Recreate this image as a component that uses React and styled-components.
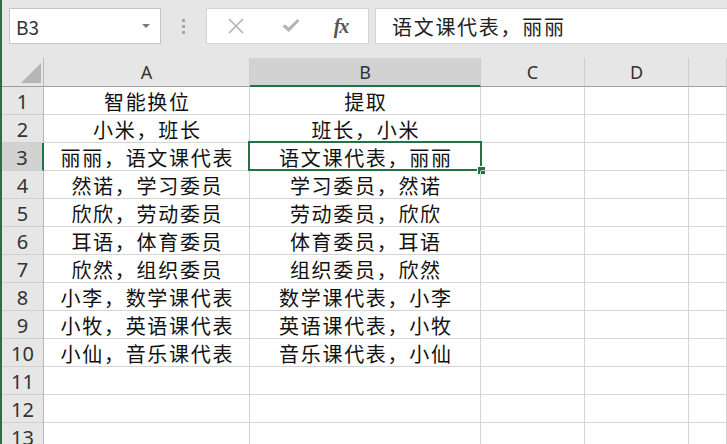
import React from "react";
import styled, { createGlobalStyle } from "styled-components";

const GREEN = "#217346";

const GlobalStyle = createGlobalStyle`
  html, body {
    margin: 0;
    padding: 0;
    overflow: hidden;
    background: #ffffff;
  }
  body {
    font-family: "Noto Sans CJK SC", "Noto Sans", sans-serif;
  }
`;

const Frame = styled.div`
  height: 100vh;
  border-left: 2px solid ${GREEN};
  display: flex;
  flex-direction: column;
`;

const Toolbar = styled.div`
  height: 58px;
  flex: none;
  background: #e6e6e6;
  display: flex;
  align-items: flex-start;
  padding: 8px 0 0 7px;
  box-sizing: border-box;
`;

const NameBox = styled.div`
  width: 152px;
  height: 36px;
  box-sizing: border-box;
  background: #fff;
  border: 1px solid #c6c6c6;
  display: flex;
  align-items: center;
  justify-content: space-between;
  padding: 0 10px 0 6px;
  font-size: 19px;
  color: #333;
`;

const Caret = styled.span`
  width: 0;
  height: 0;
  border-left: 4px solid transparent;
  border-right: 4px solid transparent;
  border-top: 4px solid #7a7a7a;
`;

const Grip = styled.div`
  width: 45px;
  height: 36px;
  display: flex;
  flex-direction: column;
  align-items: center;
  justify-content: center;
  gap: 3px;
`;

const Dot = styled.span`
  width: 3px;
  height: 3px;
  background: #a6a6a6;
`;

const ButtonBox = styled.div`
  width: 163px;
  height: 36px;
  box-sizing: border-box;
  background: #fff;
  border: 1px solid #d4d4d4;
  display: flex;
  align-items: center;
  padding-left: 20px;
`;

const IconSlot = styled.span`
  width: ${({ w }) => w}px;
  display: flex;
  align-items: center;
  justify-content: center;
  color: ${({ dark }) => (dark ? "#555" : "#b4b4b4")};
`;

const Fx = styled.span`
  font-family: "Liberation Serif", serif;
  font-style: italic;
  font-weight: bold;
  font-size: 20px;
  letter-spacing: -1px;
`;

const FormulaBox = styled.div`
  flex: 1;
  height: 36px;
  margin-left: 6px;
  box-sizing: border-box;
  background: #fff;
  border: 1px solid #d4d4d4;
  border-right: none;
  display: flex;
  align-items: center;
  padding-left: 16px;
  font-size: 20px;
  letter-spacing: 1.7px;
  color: #222;
`;

const Sheet = styled.div`
  flex: 1;
  display: grid;
  grid-template-columns: 42px 206px 231px 104px 104px 1fr;
  grid-template-rows: 29px;
  grid-auto-rows: 28px;
  overflow: hidden;
`;

const Corner = styled.div`
  background: #e6e6e6;
  border-right: 1px solid #b8b8b8;
  border-bottom: 1px solid #a0a0a0;
  box-sizing: border-box;
  display: flex;
  align-items: flex-end;
  justify-content: flex-end;
  padding: 0 2px 3px 0;
`;

const CornerMark = styled.span`
  width: 0;
  height: 0;
  border-left: 20px solid transparent;
  border-bottom: 20px solid #b5b5b5;
`;

const ColHead = styled.div`
  background: ${({ active }) => (active ? "#d2d2d2" : "#e6e6e6")};
  border-right: 1px solid #cdcdcd;
  border-bottom: ${({ active }) => (active ? `2px solid ${GREEN}` : "1px solid #a0a0a0")};
  box-sizing: border-box;
  display: flex;
  align-items: center;
  justify-content: center;
  padding-top: ${({ active }) => (active ? 1 : 0)}px;
  font-family: "Noto Sans", sans-serif;
  font-size: 18px;
  color: #333;
`;

const RowHead = styled.div`
  background: ${({ active }) => (active ? "#d2d2d2" : "#e6e6e6")};
  border-right: ${({ active }) => (active ? `2px solid ${GREEN}` : "1px solid #b8b8b8")};
  border-bottom: 1px solid #d0d0d0;
  box-sizing: border-box;
  display: flex;
  align-items: center;
  justify-content: center;
  padding-top: 1px;
  font-family: "Noto Sans", sans-serif;
  font-size: 20px;
  color: #333;
`;

const Cell = styled.div`
  position: relative;
  border-right: 1px solid #d4d4d4;
  border-bottom: 1px solid #d4d4d4;
  box-sizing: border-box;
  display: flex;
  align-items: center;
  justify-content: center;
  padding-top: 1px;
  font-size: 20px;
  letter-spacing: 1.7px;
  color: #111;
  white-space: nowrap;

  ${({ selected }) =>
    selected &&
    `
    &::before {
      content: "";
      position: absolute;
      left: -2px;
      top: -2px;
      right: -2px;
      bottom: -1px;
      border: 2px solid ${GREEN};
      pointer-events: none;
    }
    &::after {
      content: "";
      position: absolute;
      right: -6px;
      bottom: -5px;
      width: 7px;
      height: 7px;
      background: ${GREEN};
      border: 1px solid #fff;
    }
  `}
`;

const CellText = styled.span`
  margin-right: -1.7px;
`;

const colA = [
  "智能换位",
  "小米，班长",
  "丽丽，语文课代表",
  "然诺，学习委员",
  "欣欣，劳动委员",
  "耳语，体育委员",
  "欣然，组织委员",
  "小李，数学课代表",
  "小牧，英语课代表",
  "小仙，音乐课代表",
];

// column B swaps the two halves around the comma
const colB = colA.map((v, i) => (i === 0 ? "提取" : v.split("，").reverse().join("，")));

const columns = ["A", "B", "C", "D", ""];
const rowCount = 14;

const CrossIcon = () => (
  <svg width="18" height="18" viewBox="0 0 18 18">
    <path d="M2 2 L16 16 M16 2 L2 16" stroke="currentColor" strokeWidth="1.6" fill="none" />
  </svg>
);

const CheckIcon = () => (
  <svg width="20" height="18" viewBox="0 0 20 18">
    <path d="M1.5 9.5 L4 7.2 L7.6 10.6 L16.5 2 L18.5 4 L7.6 15 Z" fill="currentColor" />
  </svg>
);

export default function App() {
  const rows = [];
  for (let r = 1; r <= rowCount; r++) {
    const a = colA[r - 1] || "";
    const b = colB[r - 1] || "";
    rows.push(
      <React.Fragment key={r}>
        <RowHead active={r === 3}>{r}</RowHead>
        <Cell>{a && <CellText>{a}</CellText>}</Cell>
        <Cell selected={r === 3}>{b && <CellText>{b}</CellText>}</Cell>
        <Cell />
        <Cell />
        <Cell />
      </React.Fragment>
    );
  }

  return (
    <>
      <GlobalStyle />
      <Frame>
        <Toolbar>
          <NameBox>
            B3
            <Caret />
          </NameBox>
          <Grip>
            <Dot />
            <Dot />
            <Dot />
          </Grip>
          <ButtonBox>
            <IconSlot w={18}>
              <CrossIcon />
            </IconSlot>
            <IconSlot w={92}>
              <CheckIcon />
            </IconSlot>
            <IconSlot w={8} dark>
              <Fx>fx</Fx>
            </IconSlot>
          </ButtonBox>
          <FormulaBox>语文课代表，丽丽</FormulaBox>
        </Toolbar>
        <Sheet>
          <Corner>
            <CornerMark />
          </Corner>
          {columns.map((c, i) => (
            <ColHead key={i} active={c === "B"}>
              {c}
            </ColHead>
          ))}
          {rows}
        </Sheet>
      </Frame>
    </>
  );
}
